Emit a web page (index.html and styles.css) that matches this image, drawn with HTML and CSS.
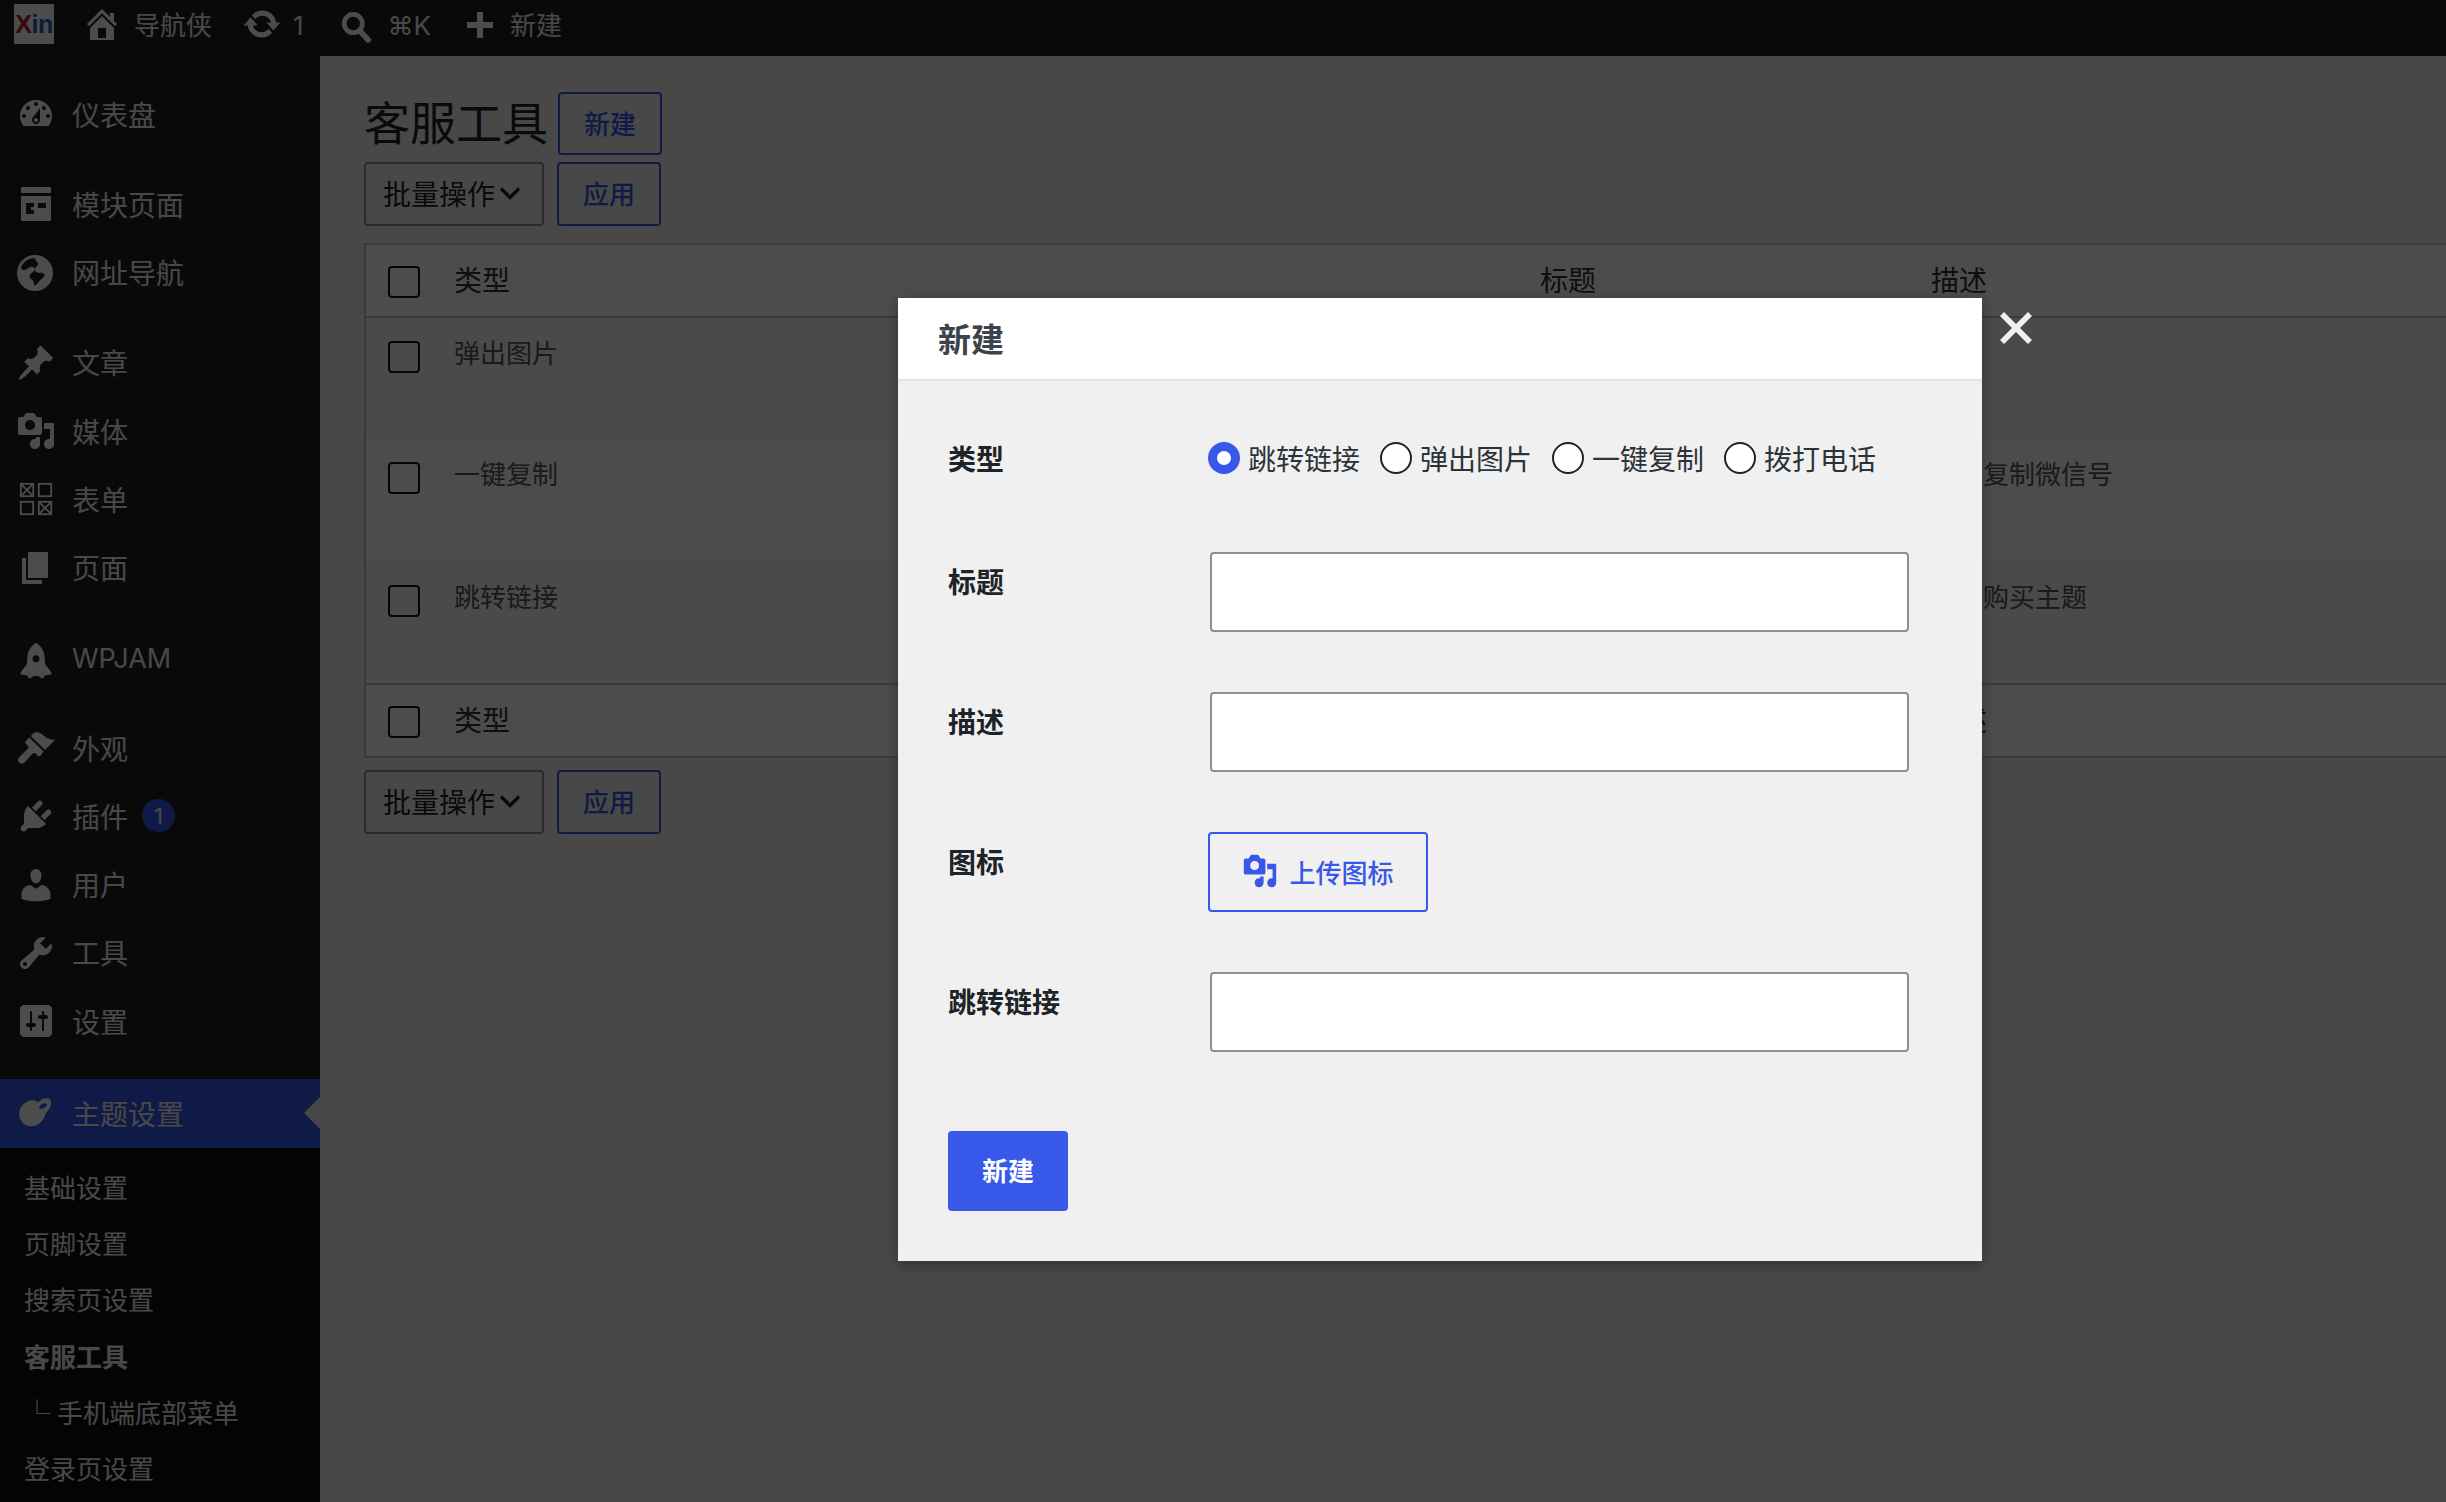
FILE: index.html
```html
<!DOCTYPE html>
<html lang="zh-CN">
<head>
<meta charset="utf-8">
<title>客服工具</title>
<link rel="stylesheet" href="styles.css">
</head>
<body>
<header class="topbar">
  <div class="logo"><span class="logo-x">X</span><span class="logo-in">in</span></div>
  <a class="top-item top-home"><svg class="ico" viewBox="0 0 20 20"><path d="M16 8.5l1.53 1.53-1.06 1.06L10 4.62l-6.47 6.47-1.06-1.06L10 2.5l4 4v-2h2v4zm-6-2.46l6 5.99V18H4v-5.97zM12 17v-5H8v5h4z"/></svg><span>导航侠</span></a>
  <a class="top-item top-update"><svg class="ico" viewBox="0 0 20 20"><path d="M10.2 3.28c3.53 0 6.43 2.61 6.92 6h2.08l-3.5 4-3.5-4h2.32c-.45-1.97-2.21-3.45-4.32-3.45-1.45 0-2.73.71-3.54 1.78L4.95 5.66C6.23 4.2 8.11 3.28 10.2 3.28zm-.4 13.44c-3.52 0-6.43-2.61-6.92-6H.8l3.5-4c1.17 1.33 2.33 2.67 3.5 4H5.48c.45 1.97 2.21 3.45 4.32 3.45 1.45 0 2.73-.71 3.54-1.78l1.71 1.95c-1.28 1.46-3.15 2.38-5.25 2.38z"/></svg><span>1</span></a>
  <a class="top-item top-search"><svg class="ico" viewBox="0 0 22 22"><circle class="ln" cx="8.4" cy="8" r="5"/><path class="ln thick" d="M12 12l4.6 5"/></svg><span>⌘K</span></a>
  <a class="top-item top-new"><svg class="ico-plus" viewBox="0 0 26 26"><path d="M10 0h6v10h10v6H16v10h-6V16H0v-6h10z"/></svg><span>新建</span></a>
</header>

<div class="layout">
  <nav class="sidebar">
    <ul class="menu">
      <li class="item sep"><svg class="ico" viewBox="0 0 20 20"><path fill-rule="evenodd" d="M3.76 16h12.48c1.1-1.37 1.76-3.11 1.76-5 0-4.42-3.58-8-8-8s-8 3.58-8 8c0 1.89.66 3.63 1.76 5zM10 4c.55 0 1 .45 1 1s-.45 1-1 1-1-.45-1-1 .45-1 1-1zM6 6c.55 0 1 .45 1 1s-.45 1-1 1-1-.45-1-1 .45-1 1-1zm8 0c.55 0 1 .45 1 1s-.45 1-1 1-1-.45-1-1 .45-1 1-1zm-5.37 5.55L12 7v6c0 1.1-.9 2-2 2s-2-.9-2-2c0-.57.24-1.08.63-1.45zM4 10c.55 0 1 .45 1 1s-.45 1-1 1-1-.45-1-1 .45-1 1-1zm12 0c.55 0 1 .45 1 1s-.45 1-1 1-1-.45-1-1 .45-1 1-1zm-5 3c0-.55-.45-1-1-1s-1 .45-1 1 .45 1 1 1 1-.45 1-1z"/></svg><span>仪表盘</span></li>
      <li class="item"><svg class="ico" viewBox="0 0 20 20"><path fill-rule="evenodd" d="M2.5 1.5h15v3h-15zM2.5 6h15v12.500h-15zM5 9.500v5.500h4v-2h-1.500v-1.500h1.500v-2zM11 9.500v2.500h4v-2.500z"/></svg><span>模块页面</span></li>
      <li class="item sep"><svg class="ico" viewBox="0 0 20 20"><path fill-rule="evenodd" d="M9.500 1a9 9 0 1 1 0 18 9 9 0 0 1 0-18zM8 2.600C5.500 3.200 3.300 5 2.400 7.500c.8 1.500 2.500 1.200 3.500.3.900-.8 2.100-1.300 3-.5 1 1 .4 2-1 2.700-1.500.8-1.400 2.400-.2 3 1.100.6 1.300 2 1.500 3.300 1-.2 1.700-1 2.300-2 .8-1.200 2.200-1.500 2.700-2.900.3-.9-.7-1.600-1.700-1.500-1.500.2-2.700-.2-3-1.400-.3-1.300 1-1.600 1.500-2.700.5-1.200-1.200-1.500-1.500-3.100-.2-.1-.3-.1-.5-.1z"/></svg><span>网址导航</span></li>
      <li class="item"><svg class="ico" viewBox="0 0 20 20"><path d="M10.44 3.02l1.82-1.82 6.36 6.35-1.83 1.82c-1.05-.68-2.48-.57-3.41.36l-.75.75c-.92.93-1.04 2.35-.35 3.41l-1.83 1.82-2.41-2.41-2.8 2.79c-.42.42-3.38 2.71-3.8 2.29s1.86-3.39 2.28-3.81l2.79-2.79L4.1 9.36l1.83-1.82c1.05.69 2.48.57 3.4-.36l.75-.75c.93-.92 1.05-2.35.36-3.41z"/></svg><span>文章</span></li>
      <li class="item"><svg class="ico" viewBox="0 0 20 20"><path fill-rule="evenodd" d="M13 11V4c0-.55-.45-1-1-1h-1.670L9 1H5L3.670 3H2c-.55 0-1 .45-1 1v7c0 .55.45 1 1 1h10c.55 0 1-.45 1-1zM7 4.500c1.380 0 2.500 1.120 2.500 2.500S8.380 9.500 7 9.500 4.500 8.380 4.500 7 5.620 4.500 7 4.500zM14 6h5v10.500c0 1.380-1.120 2.500-2.500 2.500S14 17.880 14 16.500s1.120-2.500 2.500-2.500c.17 0 .34.02.5.05V9h-3V6zm-4 8.050V13h2v3.500c0 1.380-1.120 2.500-2.500 2.500S7 17.880 7 16.500 8.120 14 9.500 14c.17 0 .34.02.5.05z"/></svg><span>媒体</span></li>
      <li class="item"><svg class="ico" viewBox="0 0 20 20"><g class="thin"><rect x="2.400" y="2.400" width="6.200" height="6.200"/><path d="M2.400 2.400l6.200 6.200M8.600 2.400l-6.200 6.200"/><rect x="11.400" y="2.400" width="6.200" height="6.200"/><rect x="2.400" y="11.400" width="6.200" height="6.200"/><rect x="11.400" y="11.400" width="6.200" height="6.200"/><path d="M11.400 11.400l6.200 6.200M17.600 11.400l-6.200 6.200"/></g></svg><span>表单</span></li>
      <li class="item sep-page"><svg class="ico" viewBox="0 0 20 20"><path d="M6 15V2h10v13H6zm-1 1h8v2H3V5h2v11z"/></svg><span>页面</span></li>
      <li class="item sep-jam"><svg class="ico" viewBox="2 0 16 16"><path fill-rule="evenodd" d="M10 1.500c2.200 1.300 3.400 3.600 3.500 6.200l.1 2.300 2.400 3.100c.4.500.2 1.100-.5 1.200l-1.900.3-1 1.300-1.700-1.100H9.100l-1.700 1.100-1-1.300-1.900-.3c-.7-.1-.9-.7-.5-1.200L6.400 10l.1-2.300c.1-2.600 1.300-4.900 3.500-6.200zM10 6.500a1.400 1.400 0 1 0 0 2.800 1.400 1.400 0 0 0 0-2.800z"/></svg><span class="latin">WPJAM</span></li>
      <li class="item"><svg class="ico" viewBox="0 0 20 20"><path d="M14.480 11.060L7.410 3.990l1.500-1.500c.5-.56 2.300-.47 3.510.32 1.210.8 1.430 1.280 2.910 2.100 1.180.64 2.450 1.260 4.450.85zm-.71.71L6.700 4.700 4.930 6.470c-.39.39-.39 1.020 0 1.410l1.060 1.060c.39.39.39 1.030 0 1.420L1.600 14.600c-.9.900-.8 2-.1 2.700s1.800.8 2.700-.1l4.200-4.400c.39-.39 1.030-.39 1.420 0l1.060 1.060c.39.39 1.020.39 1.410 0z"/></svg><span>外观</span></li>
      <li class="item"><svg class="ico" viewBox="0 0 20 20"><path d="M13.110 4.360L9.870 7.600 8 5.730l3.240-3.240c.35-.34 1.050-.2 1.560.32.52.51.66 1.210.31 1.550zm-8 1.770l.91-1.120 9.010 9.010-1.190.84c-.71.71-2.630 1.160-3.820 1.160H6.140L4.900 17.260c-.59.59-1.540.59-2.120 0-.59-.58-.59-1.530 0-2.120l1.240-1.240v-3.880c0-1.130.4-3.190 1.090-3.890zm7.260 3.970l3.240-3.240c.34-.35 1.040-.21 1.550.31.52.51.66 1.210.31 1.550l-3.240 3.250z"/></svg><span>插件</span><span class="badge">1</span></li>
      <li class="item"><svg class="ico" viewBox="0 0 20 20"><path d="M10 9.250c-2.270 0-2.730-3.440-2.730-3.440C7 4.020 7.820 2 9.970 2c2.160 0 2.980 2.020 2.710 3.810 0 0-.41 3.440-2.680 3.440zm0 2.570L12.720 10c2.390 0 4.520 2.330 4.520 4.530v2.490s-3.650 1.130-7.240 1.130c-3.650 0-7.240-1.130-7.240-1.130v-2.490c0-2.250 1.940-4.480 4.470-4.480z"/></svg><span>用户</span></li>
      <li class="item"><svg class="ico" viewBox="0 0 20 20"><path fill-rule="evenodd" d="M16.680 9.770c-1.340 1.340-3.300 1.670-4.950.99l-5.410 6.520c-.99.99-2.590.99-3.580 0s-.99-2.590 0-3.570l6.520-5.420c-.68-1.650-.35-3.610.99-4.950 1.280-1.280 3.120-1.620 4.720-1.060l-2.890 2.890 2.820 2.820 2.860-2.870c.53 1.580.18 3.390-1.080 4.650zM3.810 16.210c.4.39 1.040.39 1.430 0 .4-.4.4-1.040 0-1.430-.39-.4-1.030-.4-1.430 0-.39.39-.39 1.030 0 1.430z"/></svg><span>工具</span></li>
      <li class="item sep-last"><svg class="ico" viewBox="0 0 20 20"><path fill-rule="evenodd" d="M18 16V4c0-1.100-.9-2-2-2H4c-1.100 0-2 .9-2 2v12c0 1.100.9 2 2 2h12c1.100 0 2-.9 2-2zM8 11h1c.55 0 1 .45 1 1s-.45 1-1 1H8v1.500c0 .28-.22.5-.5.5s-.5-.22-.5-.5V13H6c-.55 0-1-.45-1-1s.45-1 1-1h1V5.500c0-.28.22-.5.5-.5s.5.22.5.5V11zm5-2h-1c-.55 0-1-.45-1-1s.45-1 1-1h1V5.500c0-.28.22-.5.5-.5s.5.22.5.5V7h1c.55 0 1 .45 1 1s-.45 1-1 1h-1v5.500c0 .28-.22.5-.5.5s-.5-.22-.5-.5V9z"/></svg><span>设置</span></li>
      <li class="item active"><svg class="ico" viewBox="0 0 20 20"><path fill-rule="evenodd" d="M8.800 3.600C5 3.600 1.600 6.600 1.600 10.400c0 3.600 2.600 6.200 5.900 6.200 3.900 0 6.400-3 7.400-6.500 1.600-1.600 2.700-3.500 2.700-5.300 0-2.100-2.100-2.700-4.200-1.800-1.100.5-1.600 1.300-2.200 1.500-.8.200-1.600-.9-2.400-.9zM15 5.200c-.9-.4-2.300.3-3.100 1.200-.5.6-.4 1.300.3 1.400 1 .2 2.300-.4 3-1.300.5-.6.4-1.100-.2-1.300z"/></svg><span>主题设置</span></li>
    </ul>
    <ul class="submenu">
      <li>基础设置</li>
      <li>页脚设置</li>
      <li>搜索页设置</li>
      <li class="current">客服工具</li>
      <li><span class="tree">└</span>手机端底部菜单</li>
      <li>登录页设置</li>
    </ul>
  </nav>

  <main class="content">
    <div class="title-row">
      <h1>客服工具</h1>
      <a class="btn btn-new">新建</a>
    </div>
    <div class="tablenav">
      <div class="bulk">批量操作<svg class="chev" viewBox="0 0 22 14"><path d="M2 2.500l9 9 9-9"/></svg></div>
      <a class="btn btn-apply">应用</a>
    </div>
    <table class="list">
      <colgroup><col class="c-check"><col class="c-type"><col class="c-title"><col class="c-desc"></colgroup>
      <thead>
        <tr><th><input type="checkbox"></th><th>类型</th><th>标题</th><th>描述</th></tr>
      </thead>
      <tbody>
        <tr class="odd"><td><input type="checkbox"></td><td>弹出图片</td><td></td><td></td></tr>
        <tr><td><input type="checkbox"></td><td>一键复制</td><td></td><td>点击复制微信号</td></tr>
        <tr class="odd"><td><input type="checkbox"></td><td>跳转链接</td><td></td><td>点击购买主题</td></tr>
      </tbody>
      <tfoot>
        <tr><th><input type="checkbox"></th><th>类型</th><th>标题</th><th>描述</th></tr>
      </tfoot>
    </table>
    <div class="tablenav tablenav-bottom">
      <div class="bulk">批量操作<svg class="chev" viewBox="0 0 22 14"><path d="M2 2.500l9 9 9-9"/></svg></div>
      <a class="btn btn-apply">应用</a>
    </div>
  </main>
</div>

<div class="overlay"></div>

<section class="modal">
  <div class="modal-head">新建</div>
  <form class="modal-form">
    <div class="row row-radio">
      <label class="row-label">类型</label>
      <div class="radios">
        <label class="radio"><input type="radio" name="t" checked>跳转链接</label>
        <label class="radio"><input type="radio" name="t">弹出图片</label>
        <label class="radio"><input type="radio" name="t">一键复制</label>
        <label class="radio"><input type="radio" name="t">拨打电话</label>
      </div>
    </div>
    <div class="row"><label class="row-label">标题</label><input class="field" type="text"></div>
    <div class="row"><label class="row-label">描述</label><input class="field" type="text"></div>
    <div class="row">
      <label class="row-label">图标</label>
      <a class="btn-upload"><svg class="upload-ico" viewBox="0 0 20 20"><path fill-rule="evenodd" d="M13 11V4c0-.55-.45-1-1-1h-1.670L9 1H5L3.670 3H2c-.55 0-1 .45-1 1v7c0 .55.45 1 1 1h10c.55 0 1-.45 1-1zM7 4.500c1.380 0 2.500 1.120 2.500 2.500S8.380 9.500 7 9.500 4.500 8.380 4.500 7 5.620 4.500 7 4.500zM14 6h5v10.500c0 1.380-1.120 2.500-2.500 2.500S14 17.880 14 16.500s1.120-2.500 2.500-2.500c.17 0 .34.02.5.05V9h-3V6zm-4 8.050V13h2v3.500c0 1.380-1.120 2.500-2.500 2.500S7 17.880 7 16.500 8.120 14 9.500 14c.17 0 .34.02.5.05z"/></svg>上传图标</a>
    </div>
    <div class="row row-last"><label class="row-label">跳转链接</label><input class="field" type="text"></div>
    <button class="btn-submit" type="button">新建</button>
  </form>
</section>
<svg class="close" viewBox="0 0 32 32"><path d="M4 0l12 12L28 0l4 4-12 12 12 12-4 4-12-12L4 32l-4-4 12-12L0 4z"/></svg>
</body>
</html>
```
FILE: styles.css
```css
* { box-sizing: border-box; }
html, body { margin: 0; height: 100%; }
body {
  width: 2446px;
  height: 1502px;
  overflow: hidden;
  position: relative;
  background: #f0f0f1;
  color: #2c3338;
  font-family: Inter, "Noto Sans CJK SC", "DejaVu Sans", sans-serif;
  font-size: 26px;
}
ul { list-style: none; margin: 0; padding: 0; }
svg { fill: currentColor; flex: none; }
.ico { width: 40px; height: 40px; }

.topbar {
  height: 56px;
  background: #202122;
  color: #f0f0f1;
  display: flex;
  align-items: center;
  padding-left: 14px;
}
.logo {
  width: 40px; height: 40px;
  margin-top: -8px;
  background: #fff;
  overflow: hidden;
  display: flex; align-items: center; justify-content: center;
  font-family: "Liberation Sans", sans-serif;
  font-size: 25px;
  font-weight: 700;
  letter-spacing: -.5px;
}
.logo-x { color: #b11f24; }
.logo-in { color: #1f5fc0; }
.top-item { display: flex; align-items: center; color: #f0f0f1; line-height: 56px; }
.top-item .ico { color: #fff; margin-top: -8px; }
.top-item span { margin-top: -5px; }
.top-home { margin-left: 28px; gap: 12px; }
.top-update { margin-left: 30px; gap: 11px; }
.top-search { margin-left: 34px; gap: 10px; }
.top-search .ico { margin-top: 2px; }
.top-new { margin-left: 36px; gap: 17px; }
.ico-plus { width: 26px; height: 26px; color: #fff; margin-top: -6px; }
.ln { fill: none; stroke: currentColor; stroke-width: 2.600; }
.thick { stroke-width: 3.200; stroke-linecap: round; }
.thin rect, .thin path { fill: none; stroke: currentColor; stroke-width: .9; }

.layout { display: flex; height: 1446px; }

.sidebar {
  width: 320px;
  flex: none;
  background: #202122;
  color: #f0f0f1;
  padding-top: 24px;
  font-size: 28px;
}
.item {
  height: 68.25px;
  display: flex;
  align-items: center;
  padding-left: 16px;
  gap: 16px;
  position: relative;
}
.item span { margin-top: -1px; }
.item .ico { color: #fff; }
.sep { margin-bottom: 22px; }
.sep-page { margin-bottom: 23px; }
.sep-jam { margin-bottom: 21px; }
.sep-last { margin-bottom: 24px; }
.latin { font-size: 27px; }
.badge {
  width: 33px; height: 33px;
  margin-left: -2px;
  border-radius: 50%;
  background: #3858e9;
  font-size: 22px;
  display: flex; align-items: center; justify-content: center;
}
.active { background: #3858e9; }
.active::after {
  content: "";
  position: absolute;
  right: 0; top: 50%;
  margin-top: -16px;
  border: 16px solid transparent;
  border-left-width: 0;
  border-right-color: #f0f0f1;
}
.submenu {
  background: #101010;
  padding: 13px 0 40px 24px;
  font-size: 26px;
  color: #f0f0f1;
}
.submenu li { height: 56.4px; line-height: 56.4px; }
.submenu .current { font-weight: 700; }
.tree { margin-right: 7px; }

.content {
  flex: 1;
  min-width: 0;
  overflow: hidden;
  padding: 36px 0 0 44px;
}
.title-row { display: flex; align-items: center; gap: 10px; }
h1 { margin: 0; font-size: 46px; font-weight: 400; line-height: 63px; color: #1d2327; }
.btn {
  display: flex;
  align-items: center;
  justify-content: center;
  border: 2px solid #3858e9;
  border-radius: 4px;
  color: #3858e9;
  font-weight: 500;
  padding-bottom: 2px;
}
.btn-new { width: 104px; height: 63px; }
.tablenav { display: flex; gap: 13px; margin-top: 7px; }
.tablenav-bottom { margin-top: 12px; }
.bulk {
  width: 180px; height: 64px;
  border: 2px solid #8c8f94;
  border-radius: 4px;
  display: flex;
  align-items: center;
  padding-left: 17px;
  padding-bottom: 2px;
  font-size: 28px;
  color: #1d2327;
  gap: 4px;
}
.chev { width: 22px; height: 14px; fill: none; stroke: #1d2327; stroke-width: 3.400; }
.btn-apply { width: 104px; height: 64px; padding-bottom: 3px; }

.list {
  margin-top: 17px;
  width: 2100px;
  table-layout: fixed;
  border-collapse: collapse;
  background: #fff;
  border: 2px solid #c3c4c7;
}
.c-check { width: 89px; }
.c-type { width: 1086px; }
.c-title { width: 391px; }
.list th {
  height: 73px;
  font-weight: 400;
  font-size: 28px;
  text-align: left;
  color: #2c3338;
  line-height: 40px;
  vertical-align: middle;
  padding: 0;
}
.list thead input { margin-top: 2px; }
.list tfoot input { margin-top: 4px; }
.list tfoot th { padding-top: 2px; }
.list tfoot th:first-child { padding-top: 0; }
.list thead tr { border-bottom: 2px solid #c3c4c7; }
.list tfoot tr { border-top: 2px solid #c3c4c7; }
.list td {
  height: 122.3px;
  vertical-align: top;
  padding: 16px 0 0;
  line-height: 40px;
  color: #50575e;
}
.odd { background: #f6f7f7; }
input[type="checkbox"] {
  appearance: none;
  display: block;
  width: 32px; height: 32px;
  margin: 0 0 0 22px;
  background: transparent;
  border: 2px solid #141414;
  border-radius: 4px;
}
.list td input[type="checkbox"] { margin-top: 7px; }

.overlay {
  position: absolute;
  inset: 0;
  background: rgba(0, 0, 0, .7);
}
.modal {
  position: absolute;
  left: 898px;
  top: 298px;
  width: 1084px;
  height: 963px;
  background: #f0f0f1;
  box-shadow: 0 4px 12px rgba(0, 0, 0, .3);
}
.modal-head {
  height: 83px;
  padding-left: 40px;
  background: #fff;
  border-bottom: 2px solid #e2e2e2;
  font-size: 33px;
  font-weight: 700;
  line-height: 85px;
  color: #3c434a;
}
.modal-form { padding: 46px 73px 50px 50px; }
.row { display: flex; align-items: flex-start; margin-bottom: 60px; }
.row-radio { height: 65px; align-items: center; }
.row-last { margin-bottom: 79px; }
.row-label {
  width: 260px;
  flex: none;
  font-size: 28px;
  font-weight: 700;
  line-height: 62px;
  color: #1d2327;
}
.radios { display: flex; gap: 20px; margin-top: -4px; font-size: 28px; color: #2c3338; }
.radio { display: flex; align-items: center; gap: 8px; }
.radio input {
  appearance: none;
  width: 32px; height: 32px;
  margin: 0;
  border: 2px solid #1d2327;
  border-radius: 50%;
  background: #fff;
}
.radio input:checked { border: 9px solid #3858e9; }
.field {
  width: 701px;
  height: 80px;
  margin-left: 2px;
  background: #fff;
  border: 2px solid #8c8f94;
  border-radius: 4px;
}
.btn-upload {
  width: 220px; height: 80px;
  padding-bottom: 2px;
  border: 2px solid #3858e9;
  border-radius: 4px;
  display: flex;
  align-items: center;
  justify-content: center;
  gap: 11px;
  color: #3858e9;
  font-weight: 500;
}
.upload-ico { width: 36px; height: 36px; }
.btn-submit {
  display: block;
  width: 120px; height: 80px;
  padding: 0 0 3px;
  background: #3858e9;
  border: 0;
  border-radius: 4px;
  color: #fff;
  font: 700 26px Inter, "Noto Sans CJK SC", sans-serif;
}
.close {
  position: absolute;
  left: 2000px;
  top: 312px;
  width: 32px; height: 32px;
  color: #f0f0f1;
}
```
